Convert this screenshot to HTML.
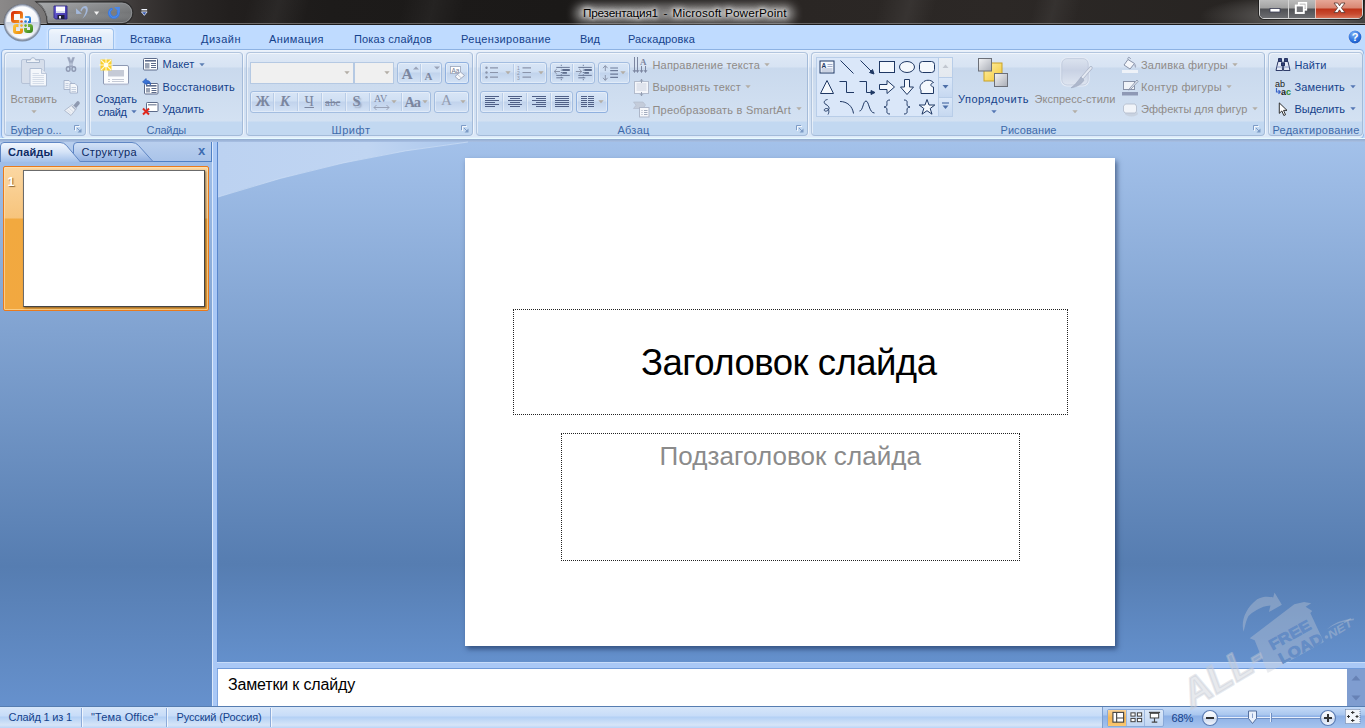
<!DOCTYPE html>
<html lang="ru"><head><meta charset="utf-8"><title>Презентация1 - Microsoft PowerPoint</title>
<style>
html,body{margin:0;padding:0}
body{width:1365px;height:728px;overflow:hidden;position:relative;background:#6A93CC;font-family:"Liberation Sans",sans-serif;font-size:12px}
.a{position:absolute}
.t{position:absolute;white-space:pre;display:block}
svg{position:absolute;overflow:visible}
.grp{position:absolute;top:52px;height:84px;border:1px solid #b2c5de;border-right-color:#a4bbd9;border-bottom-color:#a4bbd9;border-radius:4px;box-sizing:border-box;
 background:linear-gradient(#dfe9f6 0,#d7e3f3 14px,#c9d9ed 15px,#d3e1f2 68px,#c2d8f1 69px,#c2d8f1 100%);box-shadow:inset 1px 1px 0 rgba(255,255,255,.55), 1px 0 0 rgba(255,255,255,.6)}
.bg{position:absolute;height:22px;box-sizing:border-box;border:1px solid #a3bde0;border-radius:3px;background:linear-gradient(#d8e5f6 0,#cfdff3 9px,#c1d3ec 10px,#d3e2f5 100%);box-shadow:inset 0 0 0 1px rgba(255,255,255,.35)}
.sep{position:absolute;top:1px;bottom:1px;width:1px;background:#b9cde8;box-shadow:1px 0 0 rgba(255,255,255,.45)}
.cb{position:absolute;height:22px;box-sizing:border-box;border:1px solid #b5c9e3;background:#f0f0f0}
</style></head>
<body>
<div class="a" style="left:0;top:0;width:1365px;height:25px;background:linear-gradient(90deg,#8b8989 0,#7b7979 40px,#545151 100px,#3c3837 138px,#2a2726 180px,#221f1e 230px,#1d1b1a 330px,#1b1918 560px,#2a2624 800px,#2c2826 1000px,#272422 1250px,#1f1d1c 1365px)"></div><div class="a" style="left:0;top:0;width:1365px;height:25px;background:linear-gradient(105deg,rgba(255,255,255,0) 0,rgba(255,255,255,0) 240px,rgba(255,255,255,.05) 270px,rgba(255,255,255,0) 300px,rgba(255,255,255,0) 390px,rgba(255,255,255,.04) 420px,rgba(255,255,255,0) 450px,rgba(255,255,255,0) 850px,rgba(255,255,255,.06) 880px,rgba(255,255,255,0) 905px,rgba(255,255,255,0) 1000px,rgba(255,255,255,.05) 1020px,rgba(255,255,255,0) 1045px,rgba(255,255,255,0) 100%)"></div><div class="a" style="left:0;top:23px;width:1365px;height:1px;background:linear-gradient(90deg,#9a9a9a,#6e6c6c 200px,#5a5858 600px,#868484 1365px)"></div><div class="a" style="left:0;top:24px;width:1365px;height:1px;background:#1c1b1b"></div><svg style="left:0;top:0" width="160" height="25" viewBox="0 0 160 25"><defs><linearGradient id="qp" x1="0" y1="0" x2="1" y2="0"><stop offset="0" stop-color="#9c9ea0"/><stop offset=".5" stop-color="#86888a"/><stop offset="1" stop-color="#727476"/></linearGradient><linearGradient id="qv" x1="0" y1="0" x2="0" y2="1"><stop offset="0" stop-color="#fff" stop-opacity=".12"/><stop offset=".5" stop-color="#fff" stop-opacity="0"/><stop offset="1" stop-color="#000" stop-opacity=".18"/></linearGradient></defs><path d="M36.500 2 H122 A10.800 10.800 0 0 1 122 23.600 H47.500 A26 26 0 0 0 36.500 2 Z" fill="url(#qp)" stroke="#2d2c2c" stroke-width="1.300"/><path d="M37.500 3 H122 A9.800 9.800 0 0 1 122 22.600 H48 A25 25 0 0 0 37.500 3 Z" fill="url(#qv)" stroke="#a3a5a7" stroke-width=".8" stroke-opacity=".75"/></svg><div class="a" style="left:574px;top:4px;width:221px;height:19px;border-radius:9px;background:rgba(255,255,255,.42);filter:blur(4px)"></div><span class="t" style="left:583px;top:6.1px;height:15px;line-height:15px;font-size:11.8px;color:#000;letter-spacing:-0.24px;text-shadow:0 0 5px rgba(255,255,255,.8),0 0 5px rgba(255,255,255,.8),0 0 8px rgba(255,255,255,.65),0 0 10px rgba(255,255,255,.55),0 0 3px rgba(255,255,255,.5);">Презентация1</span><span class="t" style="left:663.5px;top:6.1px;height:15px;line-height:15px;font-size:11.8px;color:#000;text-shadow:0 0 5px rgba(255,255,255,.8),0 0 5px rgba(255,255,255,.8),0 0 8px rgba(255,255,255,.65),0 0 10px rgba(255,255,255,.55),0 0 3px rgba(255,255,255,.5);">-</span><span class="t" style="left:672.5px;top:6.1px;height:15px;line-height:15px;font-size:11.8px;color:#000;letter-spacing:0.13px;text-shadow:0 0 5px rgba(255,255,255,.8),0 0 5px rgba(255,255,255,.8),0 0 8px rgba(255,255,255,.65),0 0 10px rgba(255,255,255,.55),0 0 3px rgba(255,255,255,.5);">Microsoft PowerPoint</span><div class="a" style="left:1180px;top:0;width:185px;height:23px;background:radial-gradient(ellipse 110px 22px at 130px 16px,rgba(255,255,255,.36),rgba(255,255,255,0))"></div><div class="a" style="left:1259px;top:-1px;width:104px;height:20px;border-radius:0 0 5px 5px;border:1px solid #d4d4d4;box-sizing:border-box;overflow:hidden;box-shadow:0 0 0 1px rgba(20,20,20,.7)"><div class="a" style="left:0;top:0;width:28px;height:18px;background:linear-gradient(#bcbcbc 0,#a2a2a2 8px,#4f5054 9px,#6c6d71 100%)"></div><div class="a" style="left:28px;top:0;width:1px;height:18px;background:#d4d4d4"></div><div class="a" style="left:29px;top:0;width:26px;height:18px;background:linear-gradient(#bcbcbc 0,#a2a2a2 8px,#4f5054 9px,#6c6d71 100%)"></div><div class="a" style="left:55px;top:0;width:1px;height:18px;background:#e6c4bc"></div><div class="a" style="left:56px;top:0;width:46px;height:18px;background:linear-gradient(#e6a797 0,#d98672 8px,#bd3319 9px,#c74a30 14px,#d87258 100%)"></div></div><svg style="left:1259px;top:0" width="104" height="19" viewBox="0 0 104 19"><rect x="11" y="8.500" width="10" height="3.500" fill="#fff" stroke="#3a3d55" stroke-width=".8"/><rect x="39.800" y="2.800" width="7.500" height="7" fill="none" stroke="#fff" stroke-width="1.700"/><rect x="36.800" y="5.500" width="8" height="7.500" fill="#75767a" stroke="#fff" stroke-width="1.900"/><path d="M75 3 L78.700 3 L80.500 5.800 L82.300 3 L86 3 L82.400 7.800 L86 12.600 L82.300 12.600 L80.500 9.800 L78.700 12.600 L75 12.600 L78.600 7.800 Z" fill="#fff" stroke="#54322c" stroke-width=".8"/></svg><svg style="left:53px;top:5px" width="15" height="15" viewBox="0 0 15 15"><defs><linearGradient id="sv" x1="0" y1="0" x2="1" y2="1"><stop offset="0" stop-color="#7468e0"/><stop offset="1" stop-color="#3a2fa0"/></linearGradient></defs><path d="M1 1 H14 V14 H2.500 L1 12.500 Z" fill="url(#sv)" stroke="#2e2785" stroke-width=".9"/><rect x="3" y="1.500" width="9" height="6.500" fill="#fdfdff"/><rect x="3" y="6" width="9" height="2" fill="#d8dcf0"/><rect x="4.500" y="10" width="7" height="4" fill="#20203a"/><rect x="6" y="11" width="2" height="2.500" fill="#e8e8f0"/></svg><svg style="left:75px;top:5px" width="15" height="15" viewBox="0 0 15 15"><g fill="#a3b8da"><path d="M0.900 3.200 L1.200 8.900 L6.900 8.700 Z"/><path d="M5.300 5.200 C6.500 2.500 8.500 1 10.500 1 C12.500 1.200 13.200 3.500 12.600 6 C12 9 10 11.500 7.300 13.800 C9.500 10.500 11 7.500 10.900 5 C10.800 3.300 9.500 3 8.300 3.600 C7.500 4.200 7 5.200 6.500 6.400 Z"/></g></svg><svg style="left:94px;top:11px" width="6" height="5" viewBox="0 0 6 5"><path d="M0 0.500 L5.200 0.500 L2.600 4 Z" fill="#f2f2f2"/></svg><svg style="left:107px;top:5px" width="15" height="15" viewBox="0 0 15 15"><path d="M4.380 4.170 A4.500 4.500 0 1 0 11.200 6.580" fill="none" stroke="#3b7be0" stroke-width="2.900" stroke-linecap="round"/><path d="M7.100 1.900 L12.900 1.900 L12.900 7.900 Z" fill="#4a88ea"/><path d="M4.380 4.170 A4.500 4.500 0 1 0 11.200 6.580" fill="none" stroke="#6aa0f4" stroke-width="1" stroke-linecap="round" opacity=".5"/></svg><svg style="left:140.500px;top:9px" width="7" height="7" viewBox="0 0 8 8"><rect x="0.500" y="0" width="6.500" height="1.600" fill="#eef3fc"/><path d="M0.500 3.300 L7 3.300 L3.800 7.300 Z" fill="#2d4fa8" stroke="#eef3fc" stroke-width=".9"/></svg>
<div class="a" style="left:0;top:25px;width:1365px;height:26px;background:#bfdbff"></div><div class="a" style="left:48px;top:28px;width:66px;height:22px;box-sizing:border-box;border:1px solid #9fc3ee;border-bottom:none;border-radius:4px 4px 0 0;background:linear-gradient(#f2f7fd 0,#e6effb 6px,#dce8f7 100%);box-shadow:0 0 3px rgba(255,255,255,.9)"></div><span class="t" style="left:60px;top:31.8px;height:14px;line-height:14px;font-size:11px;color:#15428B;letter-spacing:0.02px;">Главная</span><span class="t" style="left:130px;top:31.8px;height:14px;line-height:14px;font-size:11px;color:#15428B;letter-spacing:0.02px;">Вставка</span><span class="t" style="left:201px;top:31.8px;height:14px;line-height:14px;font-size:11px;color:#15428B;letter-spacing:0.50px;">Дизайн</span><span class="t" style="left:269px;top:31.8px;height:14px;line-height:14px;font-size:11px;color:#15428B;letter-spacing:0.42px;">Анимация</span><span class="t" style="left:354px;top:31.8px;height:14px;line-height:14px;font-size:11px;color:#15428B;letter-spacing:0.17px;">Показ слайдов</span><span class="t" style="left:461px;top:31.8px;height:14px;line-height:14px;font-size:11px;color:#15428B;letter-spacing:0.36px;">Рецензирование</span><span class="t" style="left:580px;top:31.8px;height:14px;line-height:14px;font-size:11px;color:#15428B;letter-spacing:0.03px;">Вид</span><span class="t" style="left:628px;top:31.8px;height:14px;line-height:14px;font-size:11px;color:#15428B;letter-spacing:0.14px;">Раскадровка</span><svg style="left:1347px;top:29px" width="16" height="16" viewBox="0 0 16 16"><defs><radialGradient id="hg" cx=".4" cy=".3" r=".8"><stop offset="0" stop-color="#7fb2f5"/><stop offset=".6" stop-color="#2a6fdc"/><stop offset="1" stop-color="#174fb0"/></radialGradient></defs><circle cx="8" cy="8" r="7" fill="url(#hg)" stroke="#cfe0f8" stroke-width="1.2"/><text x="8" y="12" text-anchor="middle" font-family="Liberation Sans" font-weight="bold" font-size="11" fill="#fff">?</text></svg>
<div class="a" style="left:0;top:50px;width:1365px;height:92px;background:#bfdbff"></div><div class="a" style="left:1px;top:49px;width:1363px;height:90px;box-sizing:border-box;border:1px solid #8db2e3;border-radius:4px;background:linear-gradient(#edf3fb 0,#e4edf9 3px,#d6e3f4 17px,#cbdbef 18px,#d3e2f4 70px,#dbe8f8 86px,#e9f3fd 89px);"></div><div class="a" style="left:0;top:138px;width:1365px;height:4px;background:linear-gradient(#e6fbff 0,#e6fbff 1px,#93aace 1px,#a8c0e4 100%)"></div>
<div class="grp" style="left:4px;width:82px"></div><svg style="left:20px;top:56px" width="28" height="31" viewBox="0 0 28 31"><rect x="1.500" y="3.500" width="23" height="24" rx="1.500" fill="#d6deeb" stroke="#b5c2d7"/><path d="M6.500 6.500 V4 H10.500 C10.500 1 15.500 1 15.500 4 H19.500 V6.500 Z" fill="#eef2f8" stroke="#a3b2ca" stroke-width=".9"/><path d="M10 12.500 H21.500 L26.500 17.500 V30 H10 Z" fill="#f4f7fb" stroke="#b0bed4"/><path d="M21.500 12.500 V17.500 H26.500" fill="#e2e8f2" stroke="#b0bed4" stroke-width=".8"/><path d="M12.500 17.500 H19 M12.500 19.500 H24 M12.500 21.500 H24 M12.500 23.500 H24 M12.500 25.500 H24 M12.500 27.500 H24" stroke="#cdd6e5" stroke-width=".8"/></svg><span class="t" style="left:10.5px;top:92.0px;height:14px;line-height:14px;font-size:11px;color:#8f8b88;letter-spacing:-0.02px;">Вставить</span><svg style="left:30.5px;top:110px" width="6" height="4" viewBox="0 0 6 4"><path d="M0.300 0.300 L5.700 0.300 L3 3.300 Z" fill="#b3aea6"/></svg><svg style="left:64px;top:57px" width="14" height="16" viewBox="0 0 14 16"><path d="M3.500 0.500 L5.500 0.500 L8.800 9.500 L7 10 Z M10.500 0.500 L8.500 0.500 L5.200 9.500 L7 10 Z" fill="#9ba6be" stroke="#8f9ab3" stroke-width=".4"/><ellipse cx="4.200" cy="12" rx="1.800" ry="2.300" fill="none" stroke="#8f9ab3" stroke-width="1.500"/><ellipse cx="9.800" cy="12" rx="1.800" ry="2.300" fill="none" stroke="#8f9ab3" stroke-width="1.500"/></svg><svg style="left:63px;top:80px" width="16" height="14" viewBox="0 0 16 14"><path d="M1 0.500 H6 L8.500 3 V9.500 H1 Z" fill="#eef2f8" stroke="#a3b0c8" stroke-width=".9"/><path d="M7 3.500 H12 L14.500 6 V13 H7 Z" fill="#f4f7fb" stroke="#a3b0c8" stroke-width=".9"/><path d="M8.500 7.500 H13 M8.500 9.500 H13 M8.500 11.500 H13 M2.500 3.500 H5.500 M2.500 5.500 H5.500 M2.500 7.500 H5.500" stroke="#b9c4d8" stroke-width=".8"/></svg><svg style="left:63px;top:101px" width="17" height="15" viewBox="0 0 17 15"><path d="M15 2 L12 5.500" stroke="#8e99b0" stroke-width="3.600" stroke-linecap="round"/><path d="M9.500 3.500 L13.500 7.500 L8 14.500 L1.500 9.500 Z" fill="#eef1f6" stroke="#aab5c9" stroke-width=".9"/><path d="M9 5 L12.500 8.500" stroke="#aab5c9" stroke-width="1.200"/><path d="M4.500 9 L8 12.500 M6.500 7.500 L10 10.500" stroke="#cfd6e2" stroke-width=".8"/></svg><span class="t" style="left:10.5px;top:122.6px;height:14px;line-height:14px;font-size:11px;color:#3e6aaa;letter-spacing:-0.10px;">Буфер о...</span><svg style="left:74px;top:125px" width="8" height="8" viewBox="0 0 8 8"><path d="M0.500 5 V0.500 H5" fill="none" stroke="#7d9bc6" stroke-width="1"/><path d="M7.500 3.500 V7.500 H3.500 Z" fill="#7d9bc6"/><path d="M3 3 L6 6" stroke="#7d9bc6" stroke-width="1"/><path d="M1.500 6 V1.500 H6" fill="none" stroke="#fff" stroke-width="1" opacity=".8"/></svg>
<div class="grp" style="left:89px;width:154px"></div><svg style="left:98px;top:57px" width="34" height="30" viewBox="0 0 34 30"><rect x="5.500" y="8.500" width="25" height="19" rx="1.500" fill="#fbfcfe" stroke="#8c98b3"/><rect x="6.500" y="26" width="24" height="2.500" fill="#c9d2e2" opacity=".7"/><rect x="10" y="13" width="16" height="6.500" fill="#c5cad6"/><path d="M10 22.500 H12 M14 22.500 H26 M10 24.500 H12 M14 24.500 H26" stroke="#c5cad6" stroke-width="1"/><rect x="2.500" y="2.500" width="11" height="11" fill="#fbd028"/><g stroke="#fff8d8" stroke-width="1.100"><path d="M8 1 V15 M1 8 H15 M3 3 L13 13 M13 3 L3 13"/></g><circle cx="8" cy="8" r="2.200" fill="#fffef0"/></svg><span class="t" style="left:95.5px;top:91.8px;height:14px;line-height:14px;font-size:11px;color:#15428B;letter-spacing:-0.04px;">Создать</span><span class="t" style="left:98px;top:104.5px;height:14px;line-height:14px;font-size:11px;color:#15428B;letter-spacing:-0.42px;">слайд</span><svg style="left:130.5px;top:110px" width="6" height="4" viewBox="0 0 6 4"><path d="M0.300 0.300 L5.700 0.300 L3 3.300 Z" fill="#5577b4"/></svg><svg style="left:143px;top:58px" width="16" height="13" viewBox="0 0 16 13"><rect x="0.500" y="0.500" width="14" height="11.500" rx="1" fill="#fff" stroke="#5d6b8a"/><rect x="2" y="2" width="11" height="1.600" fill="#5d6b8a"/><rect x="2" y="5" width="4.500" height="5.500" fill="#9aa3b5"/><path d="M8 5.500 H13 M8 7.500 H13 M8 9.500 H13" stroke="#5d6b8a" stroke-width="1"/></svg><span class="t" style="left:162.5px;top:57.2px;height:14px;line-height:14px;font-size:11px;color:#15428B;letter-spacing:0.17px;">Макет</span><svg style="left:198.5px;top:63px" width="6" height="4" viewBox="0 0 6 4"><path d="M0.300 0.300 L5.700 0.300 L3 3.300 Z" fill="#5d7fb3"/></svg><svg style="left:142px;top:78px" width="17" height="17" viewBox="0 0 17 17"><rect x="2.500" y="5.500" width="13.500" height="10.500" rx="1" fill="#fff" stroke="#5d6b8a"/><rect x="4" y="7" width="10.500" height="1.600" fill="#5d6b8a"/><rect x="4" y="10" width="4" height="4.500" fill="#9aa3b5"/><path d="M9.500 10.500 H14.500 M9.500 12.500 H14.500 M9.500 14.500 H14.500" stroke="#5d6b8a" stroke-width="1"/><path d="M0.500 4 L4 0.500 L4.500 2.500 C7.500 2.500 9 4.500 8.500 7 C8 5.500 6.500 5 4.800 5.200 L5 7 Z" fill="#3a73d6" stroke="#1d4fae" stroke-width=".6"/></svg><span class="t" style="left:162.5px;top:80.3px;height:14px;line-height:14px;font-size:11px;color:#15428B;letter-spacing:0.17px;">Восстановить</span><svg style="left:142px;top:102px" width="17" height="13" viewBox="0 0 17 13"><rect x="4.500" y="0.500" width="11.500" height="9" rx=".8" fill="#fff" stroke="#5d6b8a"/><rect x="6" y="2" width="8.500" height="1.500" fill="#8f98ab"/><path d="M1 6.500 L7 12.500 M7 6.500 L1 12.500" stroke="#e0261c" stroke-width="2"/></svg><span class="t" style="left:162.5px;top:102.3px;height:14px;line-height:14px;font-size:11px;color:#15428B;letter-spacing:-0.07px;">Удалить</span><span class="t" style="left:146.5px;top:122.6px;height:14px;line-height:14px;font-size:11px;color:#3e6aaa;letter-spacing:-0.24px;">Слайды</span>
<div class="grp" style="left:246px;width:227px"></div><div class="cb" style="left:250px;top:62px;width:104px"></div><svg style="left:343.5px;top:71px" width="6" height="4" viewBox="0 0 6 4"><path d="M0.300 0.300 L5.700 0.300 L3 3.300 Z" fill="#b3aea6"/></svg><div class="cb" style="left:354px;top:62px;width:40px"></div><svg style="left:383.5px;top:71px" width="6" height="4" viewBox="0 0 6 4"><path d="M0.300 0.300 L5.700 0.300 L3 3.300 Z" fill="#b3aea6"/></svg><div class="bg" style="left:397px;top:62px;width:45px"><div class="sep" style="left:22px"></div></div><span class="t" style="left:401.5px;top:64.2px;height:20px;line-height:20px;font-size:15.5px;color:#7b869f;font-weight:bold;font-family:'Liberation Serif', serif;">A</span><svg style="left:413px;top:66px" width="6" height="4" viewBox="0 0 6 4"><path d="M0 3.500 L3 0.500 L6 3.500 Z" fill="#9aa3b8"/></svg><span class="t" style="left:424.5px;top:68.5px;height:14px;line-height:14px;font-size:11px;color:#7b869f;font-weight:bold;font-family:'Liberation Serif', serif;">A</span><svg style="left:434px;top:66px" width="6" height="4" viewBox="0 0 6 4"><path d="M0 0.500 L6 0.500 L3 3.500 Z" fill="#9aa3b8"/></svg><div class="bg" style="left:445px;top:62px;width:24px;border-color:#8fb0df"></div><svg style="left:448px;top:64px" width="18" height="18" viewBox="0 0 18 18"><rect x="2.500" y="2.500" width="10" height="7" fill="#fff" stroke="#9aa3b8" stroke-width=".8"/><text x="3.500" y="8.500" font-family="Liberation Sans" font-size="6.500" fill="#6f7a93">Aa</text><path d="M12.500 8 L16.500 11.500 L11 16 L7 12.500 Z" fill="#f6f8fb" stroke="#9aa3b8" stroke-width=".9"/><path d="M9.500 10.500 L13.500 14" stroke="#b6bfd0" stroke-width=".8"/></svg><div class="bg" style="left:250px;top:91px;width:181px"><div class="sep" style="left:22px"></div><div class="sep" style="left:46px"></div><div class="sep" style="left:70px"></div><div class="sep" style="left:94px"></div><div class="sep" style="left:118px"></div><div class="sep" style="left:150px"></div></div><span class="t" style="left:255.5px;top:91.7px;height:19px;line-height:19px;font-size:14.5px;color:#7b869f;font-weight:bold;font-family:'Liberation Serif', serif;">Ж</span><span class="t" style="left:280px;top:91.7px;height:19px;line-height:19px;font-size:14.5px;color:#7b869f;font-weight:bold;font-style:italic;font-family:'Liberation Serif', serif;">К</span><span class="t" style="left:304.5px;top:91.7px;height:19px;line-height:19px;font-size:14.5px;color:#7b869f;font-family:'Liberation Serif', serif;text-decoration:underline;">Ч</span><span class="t" style="left:325px;top:94.8px;height:14px;line-height:14px;font-size:11px;color:#7b869f;font-family:'Liberation Serif', serif;text-decoration:line-through;">abc</span><span class="t" style="left:352.5px;top:91.5px;height:19px;line-height:19px;font-size:14.5px;color:#7b869f;font-weight:bold;font-family:'Liberation Serif', serif;text-shadow:1.500px 1.500px 1.500px rgba(90,100,130,.4);">S</span><span class="t" style="left:374px;top:91.5px;height:13px;line-height:13px;font-size:10px;color:#7b869f;font-family:'Liberation Serif', serif;">AV</span><svg style="left:373px;top:104px" width="17" height="7" viewBox="0 0 17 7"><path d="M1 3.500 H16 M3.500 1 L1 3.500 L3.500 6 M13.500 1 L16 3.500 L13.500 6" fill="none" stroke="#9aa3b8" stroke-width="1"/></svg><svg style="left:390.5px;top:100px" width="6" height="4" viewBox="0 0 6 4"><path d="M0.300 0.300 L5.700 0.300 L3 3.300 Z" fill="#b3aea6"/></svg><span class="t" style="left:404.5px;top:92.5px;height:19px;line-height:19px;font-size:14.5px;color:#7b869f;letter-spacing:-1.12px;font-weight:bold;font-family:'Liberation Serif', serif;">Aa</span><svg style="left:421.5px;top:100px" width="6" height="4" viewBox="0 0 6 4"><path d="M0.300 0.300 L5.700 0.300 L3 3.300 Z" fill="#b3aea6"/></svg><div class="bg" style="left:434px;top:91px;width:35px"></div><span class="t" style="left:441px;top:90.2px;height:20px;line-height:20px;font-size:15px;color:#929bb0;font-family:'Liberation Serif', serif;">A</span><svg style="left:459.5px;top:100px" width="6" height="4" viewBox="0 0 6 4"><path d="M0.300 0.300 L5.700 0.300 L3 3.300 Z" fill="#b3aea6"/></svg><span class="t" style="left:331.5px;top:122.6px;height:14px;line-height:14px;font-size:11px;color:#3e6aaa;letter-spacing:0.56px;">Шрифт</span><svg style="left:461px;top:125px" width="8" height="8" viewBox="0 0 8 8"><path d="M0.500 5 V0.500 H5" fill="none" stroke="#7d9bc6" stroke-width="1"/><path d="M7.500 3.500 V7.500 H3.500 Z" fill="#7d9bc6"/><path d="M3 3 L6 6" stroke="#7d9bc6" stroke-width="1"/><path d="M1.500 6 V1.500 H6" fill="none" stroke="#fff" stroke-width="1" opacity=".8"/></svg>
<div class="grp" style="left:476px;width:332px"></div><div class="bg" style="left:480px;top:62px;width:67px"><div class="sep" style="left:32px"></div></div><svg style="left:485px;top:66px" width="14" height="13" viewBox="0 0 14 13"><circle cx="1.500" cy="1.800" r="1.200" fill="#8a94aa"/><circle cx="1.500" cy="6.500" r="1.200" fill="#8a94aa"/><circle cx="1.500" cy="11.200" r="1.200" fill="#8a94aa"/><path d="M5 1.800 H13 M5 6.500 H13 M5 11.200 H13" stroke="#8a94aa" stroke-width="1.200"/></svg><svg style="left:504.5px;top:71px" width="6" height="4" viewBox="0 0 6 4"><path d="M0.300 0.300 L5.700 0.300 L3 3.300 Z" fill="#b3aea6"/></svg><svg style="left:517px;top:65px" width="16" height="15" viewBox="0 0 16 15"><text x="0" y="4.500" font-size="5" font-family="Liberation Sans" fill="#8a94aa">1</text><text x="0" y="9.500" font-size="5" font-family="Liberation Sans" fill="#8a94aa">2</text><text x="0" y="14.500" font-size="5" font-family="Liberation Sans" fill="#8a94aa">3</text><path d="M5.500 2.800 H14 M5.500 7.500 H14 M5.500 12.200 H14" stroke="#8a94aa" stroke-width="1.200"/></svg><svg style="left:537.5px;top:71px" width="6" height="4" viewBox="0 0 6 4"><path d="M0.300 0.300 L5.700 0.300 L3 3.300 Z" fill="#b3aea6"/></svg><div class="bg" style="left:550px;top:62px;width:45px"><div class="sep" style="left:21px"></div></div><svg style="left:553px;top:64px" width="18" height="17" viewBox="0 0 18 17"><path d="M8.300 0.800 V16.200" stroke="#5d6c8c" stroke-width="1" stroke-dasharray="1 1.400"/><path d="M3.300 3.400 H16.800 M3.300 11.400 H16.800 M3.300 13.800 H10.300" stroke="#6c7a98" stroke-width="1"/><path d="M9.300 6 H16.800 M9.300 8.800 H13.900" stroke="#5d6c8c" stroke-width="1.800"/><path d="M7 7.500 H1.200 M3.800 5 L1.200 7.500 L3.800 10" fill="none" stroke="#8a94aa" stroke-width="1"/></svg><svg style="left:575.3px;top:64px" width="18" height="17" viewBox="0 0 18 17"><path d="M8.300 0.800 V16.200" stroke="#5d6c8c" stroke-width="1" stroke-dasharray="1 1.400"/><path d="M3.300 3.400 H16.800 M3.300 11.400 H16.800 M3.300 13.800 H10.300" stroke="#6c7a98" stroke-width="1"/><path d="M9.300 6 H16.800 M9.300 8.800 H13.900" stroke="#5d6c8c" stroke-width="1.800"/><path d="M0.800 7.500 H6.800 M4.200 5 L6.800 7.500 L4.200 10" fill="none" stroke="#8a94aa" stroke-width="1"/></svg><div class="bg" style="left:598px;top:62px;width:32px"></div><svg style="left:602px;top:65px" width="17" height="16" viewBox="0 0 17 16"><path d="M3.300 0.800 V6 M1 3.200 L3.300 0.600 L5.600 3.200 M3.300 10 V15.200 M1 12.800 L3.300 15.400 L5.600 12.800" fill="none" stroke="#8a94aa" stroke-width="1"/><path d="M8.200 3 H16 M8.200 5.700 H16 M8.200 9.200 H16 M8.200 12.300 H16" stroke="#6c7a98" stroke-width="1.200"/></svg><svg style="left:619.5px;top:71px" width="6" height="4" viewBox="0 0 6 4"><path d="M0.300 0.300 L5.700 0.300 L3 3.300 Z" fill="#b3aea6"/></svg><div class="bg" style="left:480px;top:91px;width:93px"><div class="sep" style="left:21px"></div><div class="sep" style="left:45px"></div><div class="sep" style="left:69px"></div></div><svg style="left:485px;top:96px" width="14" height="12" viewBox="0 0 14 12" shape-rendering="crispEdges"><rect x="0" y="0" width="14" height="1" fill="#4f5f86"/><rect x="0" y="2" width="10" height="1" fill="#4f5f86"/><rect x="0" y="4" width="14" height="1" fill="#4f5f86"/><rect x="0" y="6" width="10" height="1" fill="#4f5f86"/><rect x="0" y="8" width="14" height="1" fill="#4f5f86"/><rect x="0" y="10" width="10" height="1" fill="#4f5f86"/></svg><svg style="left:508px;top:96px" width="14" height="12" viewBox="0 0 14 12" shape-rendering="crispEdges"><rect x="0" y="0" width="14" height="1" fill="#4f5f86"/><rect x="2" y="2" width="10" height="1" fill="#4f5f86"/><rect x="0" y="4" width="14" height="1" fill="#4f5f86"/><rect x="2" y="6" width="10" height="1" fill="#4f5f86"/><rect x="0" y="8" width="14" height="1" fill="#4f5f86"/><rect x="2" y="10" width="10" height="1" fill="#4f5f86"/></svg><svg style="left:532px;top:96px" width="14" height="12" viewBox="0 0 14 12" shape-rendering="crispEdges"><rect x="0" y="0" width="14" height="1" fill="#4f5f86"/><rect x="4" y="2" width="10" height="1" fill="#4f5f86"/><rect x="0" y="4" width="14" height="1" fill="#4f5f86"/><rect x="4" y="6" width="10" height="1" fill="#4f5f86"/><rect x="0" y="8" width="14" height="1" fill="#4f5f86"/><rect x="4" y="10" width="10" height="1" fill="#4f5f86"/></svg><svg style="left:555px;top:96px" width="14" height="12" viewBox="0 0 14 12" shape-rendering="crispEdges"><rect x="0" y="0" width="14" height="1" fill="#4f5f86"/><rect x="0" y="2" width="14" height="1" fill="#4f5f86"/><rect x="0" y="4" width="14" height="1" fill="#4f5f86"/><rect x="0" y="6" width="14" height="1" fill="#4f5f86"/><rect x="0" y="8" width="14" height="1" fill="#4f5f86"/><rect x="0" y="10" width="14" height="1" fill="#4f5f86"/></svg><div class="bg" style="left:576px;top:91px;width:32px;border-color:#8fb0df"></div><svg style="left:581px;top:96px" width="14" height="12" viewBox="0 0 14 12" shape-rendering="crispEdges"><rect x="0" y="0" width="6" height="1" fill="#4f5f86"/><rect x="7" y="0" width="6" height="1" fill="#4f5f86"/><rect x="0" y="2" width="6" height="1" fill="#4f5f86"/><rect x="7" y="2" width="6" height="1" fill="#4f5f86"/><rect x="0" y="4" width="6" height="1" fill="#4f5f86"/><rect x="7" y="4" width="6" height="1" fill="#4f5f86"/><rect x="0" y="6" width="6" height="1" fill="#4f5f86"/><rect x="7" y="6" width="6" height="1" fill="#4f5f86"/><rect x="0" y="8" width="6" height="1" fill="#4f5f86"/><rect x="7" y="8" width="6" height="1" fill="#4f5f86"/><rect x="0" y="10" width="6" height="1" fill="#4f5f86"/><rect x="7" y="10" width="6" height="1" fill="#4f5f86"/></svg><svg style="left:597.5px;top:100px" width="6" height="4" viewBox="0 0 6 4"><path d="M0.300 0.300 L5.700 0.300 L3 3.300 Z" fill="#b3aea6"/></svg><svg style="left:633px;top:57px" width="16" height="16" viewBox="0 0 16 16"><path d="M1.500 0 V15 M4.500 0 V15 M8.500 9 V15 M12.500 9 V15" stroke="#7c86a0" stroke-width="1"/><path d="M0 13 L1.500 15.500 L3 13 M3 13 L4.500 15.500 L6 13 M7 13 L8.500 15.500 L10 13 M11 13 L12.500 15.500 L14 13" fill="none" stroke="#7c86a0" stroke-width=".9"/><text x="7" y="7.500" font-family="Liberation Serif" font-weight="bold" font-size="9" fill="#7c86a0">A</text></svg><span class="t" style="left:652.5px;top:57.7px;height:14px;line-height:14px;font-size:11px;color:#8f8b88;letter-spacing:0.18px;">Направление текста</span><svg style="left:763.5px;top:63px" width="6" height="4" viewBox="0 0 6 4"><path d="M0.300 0.300 L5.700 0.300 L3 3.300 Z" fill="#b3aea6"/></svg><svg style="left:633px;top:79px" width="17" height="17" viewBox="0 0 17 17"><rect x="1.500" y="2.500" width="14" height="12" fill="#f4f6fa" stroke="#b3bccd"/><path d="M3.500 5 H13.500 M3.500 7 H13.500 M3.500 9 H13.500 M3.500 11 H13.500" stroke="#c1c9d8" stroke-width=".8"/><path d="M8.500 0 V4 M7 1.800 L8.500 0.300 L10 1.800 M8.500 13 V17 M7 15.200 L8.500 16.700 L10 15.200" fill="none" stroke="#8e98ad" stroke-width=".9"/></svg><span class="t" style="left:652.5px;top:80.3px;height:14px;line-height:14px;font-size:11px;color:#8f8b88;letter-spacing:0.19px;">Выровнять текст</span><svg style="left:744.5px;top:85px" width="6" height="4" viewBox="0 0 6 4"><path d="M0.300 0.300 L5.700 0.300 L3 3.300 Z" fill="#b3aea6"/></svg><svg style="left:633px;top:101px" width="17" height="17" viewBox="0 0 17 17"><path d="M0.500 1 H10 L12.500 4 L10 7.500 H0.500 L3 4.200 Z" fill="#c4ccda" stroke="#b0b9ca" stroke-width=".6"/><rect x="6.500" y="6.500" width="9.500" height="9.500" fill="#f6f8fb" stroke="#aeb7c9"/><path d="M8.500 9.500 H9.500 M11 9.500 H14.500 M8.500 11.500 H9.500 M11 11.500 H14.500 M8.500 13.500 H9.500 M11 13.500 H14.500" stroke="#9aa4b8" stroke-width=".9"/></svg><span class="t" style="left:652.5px;top:102.5px;height:14px;line-height:14px;font-size:11px;color:#8f8b88;letter-spacing:0.21px;">Преобразовать в SmartArt</span><svg style="left:795.5px;top:107px" width="6" height="4" viewBox="0 0 6 4"><path d="M0.300 0.300 L5.700 0.300 L3 3.300 Z" fill="#b3aea6"/></svg><span class="t" style="left:617.5px;top:122.6px;height:14px;line-height:14px;font-size:11px;color:#3e6aaa;letter-spacing:0.23px;">Абзац</span><svg style="left:796px;top:125px" width="8" height="8" viewBox="0 0 8 8"><path d="M0.500 5 V0.500 H5" fill="none" stroke="#7d9bc6" stroke-width="1"/><path d="M7.500 3.500 V7.500 H3.500 Z" fill="#7d9bc6"/><path d="M3 3 L6 6" stroke="#7d9bc6" stroke-width="1"/><path d="M1.500 6 V1.500 H6" fill="none" stroke="#fff" stroke-width="1" opacity=".8"/></svg>
<div class="grp" style="left:811px;width:454px"></div><div class="a" style="left:816px;top:57px;width:137px;height:60px;box-sizing:border-box;border:1px solid #b8cde8;background:#dae7f9"></div><div class="a" style="left:938px;top:57px;width:15px;height:60px;box-sizing:border-box;border:1px solid #b8cde8;background:linear-gradient(#e9eef4 0,#e4e9ef 19px,#b8cde8 19px,#b8cde8 20px,#dbe8f9 20px,#c6d8f0 39px,#b8cde8 39px,#b8cde8 40px,#dbe8f9 40px,#c6d8f0 100%)"></div><svg style="left:942px;top:64px" width="7" height="4" viewBox="0 0 7 4"><path d="M0.500 4 L3.500 0.500 L6.500 4 Z" fill="#c2c7d0"/></svg><svg style="left:942px;top:85px" width="7" height="4" viewBox="0 0 7 4"><path d="M0.500 0 L6.500 0 L3.500 3.500 Z" fill="#4d6fa8"/></svg><svg style="left:942px;top:102px" width="7" height="8" viewBox="0 0 7 8"><path d="M0 1 H7" stroke="#4d6fa8" stroke-width="1.200"/><path d="M0.500 3.500 L6.500 3.500 L3.500 7 Z" fill="#4d6fa8"/></svg><svg style="left:818px;top:58px" width="18" height="18" viewBox="0 0 18 18"><g fill="none" stroke="#1f3864" stroke-width="1"><rect x="2" y="3" width="14" height="12" fill="#f4f8fd"/><text x="3.500" y="9.500" font-family="Liberation Sans" font-weight="bold" font-size="6.500" fill="#1f3864" stroke="none">A</text><path d="M9.500 6.500 H14.500 M9.500 8.500 H14.500 M3.500 11 H14.500 M3.500 13 H14.500" stroke-width=".600" stroke="#6b7ca8"/></g></svg><svg style="left:838px;top:58px" width="18" height="18" viewBox="0 0 18 18"><g fill="none" stroke="#1f3864" stroke-width="1"><path d="M2.500 2.500 L15.500 15.500"/></g></svg><svg style="left:858px;top:58px" width="18" height="18" viewBox="0 0 18 18"><g fill="none" stroke="#1f3864" stroke-width="1"><path d="M2.500 2.500 L14.500 14.500"/><path d="M16 16 L11.500 14.500 L14.500 11.500 Z" fill="#1f3864"/></g></svg><svg style="left:878px;top:58px" width="18" height="18" viewBox="0 0 18 18"><g fill="none" stroke="#1f3864" stroke-width="1"><rect x="1.500" y="3.500" width="15" height="11" fill="#f4f8fd"/></g></svg><svg style="left:898px;top:58px" width="18" height="18" viewBox="0 0 18 18"><g fill="none" stroke="#1f3864" stroke-width="1"><ellipse cx="9" cy="9" rx="7.500" ry="5.500" fill="#f4f8fd"/></g></svg><svg style="left:918px;top:58px" width="18" height="18" viewBox="0 0 18 18"><g fill="none" stroke="#1f3864" stroke-width="1"><rect x="1.500" y="3.500" width="15" height="11" rx="3" fill="#f4f8fd"/></g></svg><svg style="left:818px;top:78px" width="18" height="18" viewBox="0 0 18 18"><g fill="none" stroke="#1f3864" stroke-width="1"><path d="M9 2.500 L15.500 15.500 H2.500 Z" fill="#f4f8fd"/></g></svg><svg style="left:838px;top:78px" width="18" height="18" viewBox="0 0 18 18"><g fill="none" stroke="#1f3864" stroke-width="1"><path d="M1.500 3.500 H8.500 V14.500 H16"/></g></svg><svg style="left:858px;top:78px" width="18" height="18" viewBox="0 0 18 18"><g fill="none" stroke="#1f3864" stroke-width="1"><path d="M1.500 3.500 H8.500 V14.500 H14"/><path d="M17 14.500 L13 12.500 V16.500 Z" fill="#1f3864"/></g></svg><svg style="left:878px;top:78px" width="18" height="18" viewBox="0 0 18 18"><g fill="none" stroke="#1f3864" stroke-width="1"><path d="M1.500 6.500 H9 V2.500 L16.500 9 L9 15.500 V11.500 H1.500 Z" fill="#f4f8fd"/></g></svg><svg style="left:898px;top:78px" width="18" height="18" viewBox="0 0 18 18"><g fill="none" stroke="#1f3864" stroke-width="1"><path d="M6.500 1.500 H11.500 V9 H15.500 L9 16.500 L2.500 9 H6.500 Z" fill="#f4f8fd"/></g></svg><svg style="left:918px;top:78px" width="18" height="18" viewBox="0 0 18 18"><g fill="none" stroke="#1f3864" stroke-width="1"><path d="M5 4.500 C7 1.500 13 1.500 15.500 4.500 C12 5.500 12 8.500 15.500 9 V15.500 H3 V12 C1.500 11 1.500 6.500 5 4.500 Z" fill="#f4f8fd"/></g></svg><svg style="left:818px;top:97.8px" width="18" height="18" viewBox="0 0 18 18"><g fill="none" stroke="#1f3864" stroke-width="1"><path d="M9.500 1.500 C6 2 5 5 8 6.500 C12 8.500 12 12 8.500 13 C5.500 13.800 5.500 10.500 8.500 10.500 C11 10.500 11.500 14 10 16.500"/></g></svg><svg style="left:838px;top:97.8px" width="18" height="18" viewBox="0 0 18 18"><g fill="none" stroke="#1f3864" stroke-width="1"><path d="M2 3.500 C9 3.500 14.500 8 15.500 15.500"/></g></svg><svg style="left:858px;top:97.8px" width="18" height="18" viewBox="0 0 18 18"><g fill="none" stroke="#1f3864" stroke-width="1"><path d="M1.500 13 C5 13 5 3 8 3 C11 3 11 15 16.500 15"/></g></svg><svg style="left:878px;top:97.8px" width="18" height="18" viewBox="0 0 18 18"><g fill="none" stroke="#1f3864" stroke-width="1"><path d="M12 2 C8 2 9 4.500 9 6 C9 8 8 9 6 9 C8 9 9 10 9 12 C9 13.500 8 16 12 16"/></g></svg><svg style="left:898px;top:97.8px" width="18" height="18" viewBox="0 0 18 18"><g fill="none" stroke="#1f3864" stroke-width="1"><path d="M6 2 C10 2 9 4.500 9 6 C9 8 10 9 12 9 C10 9 9 10 9 12 C9 13.500 10 16 6 16"/></g></svg><svg style="left:918px;top:97.8px" width="18" height="18" viewBox="0 0 18 18"><g fill="none" stroke="#1f3864" stroke-width="1"><path d="M9 1.500 L11 7 H16.800 L12.200 10.500 L14 16.200 L9 12.700 L4 16.200 L5.800 10.500 L1.200 7 H7 Z" fill="#f4f8fd"/></g></svg><svg style="left:976px;top:56px" width="34" height="33" viewBox="0 0 34 33"><defs><linearGradient id="gq" x1="0" y1="0" x2="1" y2="1"><stop offset="0" stop-color="#f3f4f6"/><stop offset="1" stop-color="#a9adb6"/></linearGradient><linearGradient id="yq" x1="0" y1="0" x2="1" y2="1"><stop offset="0" stop-color="#fff2a8"/><stop offset="1" stop-color="#f2c637"/></linearGradient></defs><rect x="8" y="7" width="18" height="18" fill="url(#yq)" stroke="#c9a227"/><rect x="2.500" y="2.500" width="13" height="12.500" fill="url(#gq)" stroke="#6b6f78"/><rect x="18.500" y="17.500" width="13" height="13" fill="url(#gq)" stroke="#6b6f78"/></svg><span class="t" style="left:958px;top:92.3px;height:14px;line-height:14px;font-size:11px;color:#15428B;letter-spacing:0.50px;">Упорядочить</span><svg style="left:990.5px;top:110px" width="6" height="4" viewBox="0 0 6 4"><path d="M0.300 0.300 L5.700 0.300 L3 3.300 Z" fill="#5577b4"/></svg><svg style="left:1060px;top:56px" width="34" height="34" viewBox="0 0 34 34"><defs><linearGradient id="xq" x1="0" y1="0" x2="0" y2="1"><stop offset="0" stop-color="#dde4f0"/><stop offset=".45" stop-color="#c9d2e4"/><stop offset="1" stop-color="#dfe6f1"/></linearGradient></defs><rect x="1" y="1.800" width="28" height="28" rx="6" fill="url(#xq)" stroke="#e6ecf6" stroke-width="1.200"/><rect x="1.800" y="2.600" width="26.400" height="26.400" rx="5.300" fill="none" stroke="#b9c4d9" stroke-width=".7"/><path d="M30.900 11.900 L22 22" stroke="#aab3c6" stroke-width="3.400" stroke-linecap="round"/><path d="M30.900 11.900 L22 22" stroke="#e4e9f2" stroke-width="2" stroke-linecap="round"/><path d="M21 21 L24 24 C22 28 17 31 11 31.800 C14.500 29.500 17.500 25.500 21 21 Z" fill="#adb7cb" stroke="#9aa5bc" stroke-width=".5"/></svg><span class="t" style="left:1034.5px;top:92.3px;height:14px;line-height:14px;font-size:11px;color:#8f8b88;letter-spacing:0.04px;">Экспресс-стили</span><svg style="left:1071.5px;top:110px" width="6" height="4" viewBox="0 0 6 4"><path d="M0.300 0.300 L5.700 0.300 L3 3.300 Z" fill="#b3aea6"/></svg><svg style="left:1122px;top:56px" width="17" height="17" viewBox="0 0 17 17"><path d="M6 3.500 L12.500 7.500 L8 13 L2 9 Z" fill="#f4f6fa" stroke="#8892a8" stroke-width="1"/><path d="M6 3.500 C5 1 8 0.500 8.500 3" fill="none" stroke="#8892a8" stroke-width=".9"/><path d="M12.500 7.500 C14.500 8.500 14.500 11 13.500 12 C12.500 11 12 9 12.500 7.500 Z" fill="#a5aec2"/><rect x="0" y="14" width="16" height="3" fill="#eef2f8"/></svg><span class="t" style="left:1141px;top:58.0px;height:14px;line-height:14px;font-size:11px;color:#8f8b88;letter-spacing:0.21px;">Заливка фигуры</span><svg style="left:1231.5px;top:63px" width="6" height="4" viewBox="0 0 6 4"><path d="M0.300 0.300 L5.700 0.300 L3 3.300 Z" fill="#b3aea6"/></svg><svg style="left:1122px;top:79px" width="17" height="17" viewBox="0 0 17 17"><rect x="1.500" y="2.500" width="11" height="8" fill="#f0f3f8" stroke="#8892a8"/><path d="M15 1 L8 9 L6.500 11 L9 10 L16 2.500 Z" fill="#e8ecf3" stroke="#7e89a2" stroke-width=".8"/><rect x="0" y="13" width="16" height="3.500" fill="#8e99b5"/></svg><span class="t" style="left:1141px;top:80.2px;height:14px;line-height:14px;font-size:11px;color:#8f8b88;letter-spacing:0.31px;">Контур фигуры</span><svg style="left:1225.5px;top:85px" width="6" height="4" viewBox="0 0 6 4"><path d="M0.300 0.300 L5.700 0.300 L3 3.300 Z" fill="#b3aea6"/></svg><svg style="left:1122px;top:101px" width="17" height="17" viewBox="0 0 17 17"><ellipse cx="9.500" cy="12.500" rx="6.500" ry="3" fill="#c6cedc" opacity=".8"/><path d="M3.500 3 H13 L14.500 5 V10.500 L12.500 12 H3 L1.500 10 V5 Z" fill="#f1f4f9" stroke="#b5bece" stroke-width=".9"/></svg><span class="t" style="left:1141px;top:102.4px;height:14px;line-height:14px;font-size:11px;color:#8f8b88;letter-spacing:0.05px;">Эффекты для фигур</span><svg style="left:1251.5px;top:107px" width="6" height="4" viewBox="0 0 6 4"><path d="M0.300 0.300 L5.700 0.300 L3 3.300 Z" fill="#b3aea6"/></svg><span class="t" style="left:1000.5px;top:122.6px;height:14px;line-height:14px;font-size:11px;color:#3e6aaa;letter-spacing:0.07px;">Рисование</span><svg style="left:1253px;top:125px" width="8" height="8" viewBox="0 0 8 8"><path d="M0.500 5 V0.500 H5" fill="none" stroke="#7d9bc6" stroke-width="1"/><path d="M7.500 3.500 V7.500 H3.500 Z" fill="#7d9bc6"/><path d="M3 3 L6 6" stroke="#7d9bc6" stroke-width="1"/><path d="M1.500 6 V1.500 H6" fill="none" stroke="#fff" stroke-width="1" opacity=".8"/></svg>
<div class="grp" style="left:1268px;width:95px"></div><svg style="left:1275px;top:57px" width="16" height="16" viewBox="0 0 16 16"><g stroke="#1d2a5a" stroke-width=".9"><path d="M3.500 1.500 H6.500 V4.500 H3.500 Z M9.500 1.500 H12.500 V4.500 H9.500 Z" fill="#33437a"/><path d="M3 4.500 H7 L7.500 13.500 H1 Z M9 4.500 H13 L15 13.500 H8.500 Z" fill="#e3e8f5"/><rect x="6.500" y="6" width="3" height="2.500" fill="#33437a"/></g><path d="M2 10 H6.500 M9.500 10 H14" stroke="#8c9cc8" stroke-width="1"/></svg><span class="t" style="left:1294.5px;top:58.0px;height:14px;line-height:14px;font-size:11px;color:#15428B;letter-spacing:0.12px;">Найти</span><svg style="left:1275px;top:79px" width="17" height="17" viewBox="0 0 17 17"><text x="0" y="7.500" font-family="Liberation Sans" font-size="9" fill="#222">ab</text><text x="6" y="16" font-family="Liberation Sans" font-weight="bold" font-size="9" fill="#222">a</text><text x="11" y="16" font-family="Liberation Sans" font-weight="bold" font-size="9" fill="#2c8a2c">c</text><path d="M1.500 9 V13 H5 M3.500 11.300 L5.300 13 L3.500 14.700" fill="none" stroke="#3a64c8" stroke-width="1.200"/></svg><span class="t" style="left:1294.5px;top:80.2px;height:14px;line-height:14px;font-size:11px;color:#15428B;letter-spacing:0.13px;">Заменить</span><svg style="left:1349.5px;top:85px" width="6" height="4" viewBox="0 0 6 4"><path d="M0.300 0.300 L5.700 0.300 L3 3.300 Z" fill="#5577b4"/></svg><svg style="left:1278px;top:102px" width="12" height="15" viewBox="0 0 14 17"><path d="M1.500 0.800 V13 L4.500 10.200 L6.800 15.500 L8.800 14.600 L6.500 9.500 H10.500 Z" fill="#fff" stroke="#222" stroke-width="1.100"/></svg><span class="t" style="left:1294.5px;top:102.4px;height:14px;line-height:14px;font-size:11px;color:#15428B;letter-spacing:-0.03px;">Выделить</span><svg style="left:1349.5px;top:107px" width="6" height="4" viewBox="0 0 6 4"><path d="M0.300 0.300 L5.700 0.300 L3 3.300 Z" fill="#5577b4"/></svg><span class="t" style="left:1272.5px;top:122.6px;height:14px;line-height:14px;font-size:11px;color:#3e6aaa;letter-spacing:0.23px;">Редактирование</span>
<div class="a" style="left:0;top:142px;width:212px;height:564px;background:linear-gradient(#a3c1ea 0,#567db1 424px,#6691cd 564px)"></div><div class="a" style="left:0;top:142px;width:212px;height:20px;background:linear-gradient(#b9cfee,#a9c3e9)"></div><div class="a" style="left:0;top:161px;width:212px;height:1px;background:#4f80c4"></div><svg style="left:0;top:142px" width="212" height="20" viewBox="0 0 212 20"><defs><linearGradient id="tb1" x1="0" y1="0" x2="0" y2="1"><stop offset="0" stop-color="#f4f8fe"/><stop offset=".5" stop-color="#d3e2f7"/><stop offset="1" stop-color="#a3c1ea"/></linearGradient><linearGradient id="tb2" x1="0" y1="0" x2="0" y2="1"><stop offset="0" stop-color="#d3e2f7"/><stop offset=".5" stop-color="#b7cdee"/><stop offset="1" stop-color="#8eaee0"/></linearGradient></defs><path d="M73.500 19.500 V4 Q73.500 0.500 77 0.500 H132 Q136 0.500 138.500 3.500 L153 19.500 Z" fill="url(#tb2)" stroke="#5f86c4"/><path d="M0.500 20 V4 Q0.500 0.500 4 0.500 H60 Q64 0.500 66.500 3.500 L80.500 20 Z" fill="url(#tb1)"/><path d="M0.500 20 V4 Q0.500 0.500 4 0.500 H60 Q64 0.500 66.500 3.500 L80.500 20" fill="none" stroke="#5f86c4"/></svg><span class="t" style="left:8px;top:145.0px;height:14px;line-height:14px;font-size:11px;color:#0d2a63;letter-spacing:0.13px;font-weight:bold;">Слайды</span><span class="t" style="left:81.5px;top:145.0px;height:14px;line-height:14px;font-size:11px;color:#0d2a63;letter-spacing:0.37px;">Структура</span><span class="t" style="left:198px;top:142.3px;height:17px;line-height:17px;font-size:13px;color:#3d6cb0;letter-spacing:-0.23px;font-weight:bold;">x</span><div class="a" style="left:3px;top:166px;width:206px;height:145px;box-sizing:border-box;border:1px solid #ea7a1c;border-radius:2px;background:linear-gradient(#fbd7a2 0,#f7c47c 51px,#f2a93f 52px,#f2a840 100%);box-shadow:inset 0 0 0 1px rgba(255,230,180,.6)"></div><div class="a" style="left:23px;top:170px;width:182px;height:137px;box-sizing:border-box;background:#fff;border:1px solid #6b6b6b;border-bottom-color:#444;border-right-color:#444;box-shadow:1px 1px 2px rgba(0,0,0,.45)"></div><span class="t" style="left:7.5px;top:173.5px;height:16px;line-height:16px;font-size:12.5px;color:#fff;font-weight:bold;text-shadow:1px 1px 1px #8a6434;">1</span><div class="a" style="left:212px;top:142px;width:5px;height:565px;background:#a9c8f6;border-left:1px solid #dce9fb;box-sizing:border-box"></div><div class="a" style="left:211px;top:142px;width:1px;height:20px;background:#4f80c4"></div>
<div class="a" style="left:217px;top:142px;width:1148px;height:520px;box-sizing:border-box;border-left:1px solid #5a87cc;background:linear-gradient(#a3c1ea 0,#567db1 422px,#6490cc 520px)"></div><svg style="left:218px;top:142px" width="260" height="60" viewBox="0 0 260 60"><defs><linearGradient id="sw" x1="0" y1="0" x2="1" y2="0"><stop offset="0" stop-color="#bcd2f1"/><stop offset=".6" stop-color="#c0d5f2"/><stop offset="1" stop-color="#aac6ec"/></linearGradient></defs><path d="M0 0 H250 Q125 14.500 0 55 Z" fill="url(#sw)"/><path d="M250 0 Q125 14.500 0 55" fill="none" stroke="#d3e2f7" stroke-opacity=".6" stroke-width="1"/></svg><div class="a" style="left:465px;top:158px;width:650px;height:488px;background:#fff;box-shadow:2px 3px 5px rgba(20,40,80,.6)"></div><div class="a" style="left:513px;top:309px;width:555px;height:106px;box-sizing:border-box;border:1px dotted #222"></div><div class="a" style="left:561px;top:433px;width:459px;height:128px;box-sizing:border-box;border:1px dotted #222"></div><span class="t" style="left:641px;top:338.5px;height:47px;line-height:47px;font-size:36.5px;color:#000;letter-spacing:-0.51px;">Заголовок слайда</span><span class="t" style="left:659.5px;top:438.5px;height:34px;line-height:34px;font-size:26px;color:#8b8b8b;letter-spacing:0.07px;">Подзаголовок слайда</span><div class="a" style="left:217px;top:662px;width:1148px;height:7px;background:linear-gradient(#c7dcfa 0,#c7dcfa 1px,#a9c8f6 1px,#a9c8f6 6px,#6f9ada 6px,#6f9ada 100%)"></div><div class="a" style="left:217px;top:669px;width:1130px;height:37px;background:#fff;border-left:1px solid #7fa6e0;box-sizing:border-box"></div><span class="t" style="left:228px;top:674.1px;height:21px;line-height:21px;font-size:16px;color:#000;letter-spacing:-0.16px;">Заметки к слайду</span><div class="a" style="left:1347px;top:669px;width:18px;height:37px;background:#7f9dd0"></div><svg style="left:1351px;top:675px" width="10" height="6" viewBox="0 0 10 6"><path d="M0.500 5.500 L5 0.500 L9.500 5.500 Z" fill="#6782b5"/></svg><svg style="left:1351px;top:695px" width="10" height="6" viewBox="0 0 10 6"><path d="M0.500 0.500 L9.500 0.500 L5 5.500 Z" fill="#6782b5"/></svg>
<div class="a" style="left:0;top:706px;width:1365px;height:22px;background:linear-gradient(#d7e6f9 0,#c7dcf8 9px,#b3d0f5 10px,#d7e5f7 18px,#bad4f7 100%);border-top:1px solid #567db1;box-sizing:border-box"></div><div class="a" style="left:1102px;top:707px;width:263px;height:21px;background:linear-gradient(#c4daf8 0,#a9c6ee 8px,#8cb0e6 9px,#a6c4ee 100%)"></div><div class="a" style="left:1102px;top:707px;width:1px;height:21px;background:#7f9fcd"></div><div class="a" style="left:81px;top:708px;width:1px;height:19px;background:#8cabda;box-shadow:1px 0 0 rgba(255,255,255,.7)"></div><div class="a" style="left:166px;top:708px;width:1px;height:19px;background:#8cabda;box-shadow:1px 0 0 rgba(255,255,255,.7)"></div><div class="a" style="left:270px;top:708px;width:1px;height:19px;background:#8cabda;box-shadow:1px 0 0 rgba(255,255,255,.7)"></div><span class="t" style="left:8.5px;top:710.0px;height:14px;line-height:14px;font-size:11px;color:#15428B;letter-spacing:-0.18px;">Слайд 1 из 1</span><span class="t" style="left:91px;top:710.0px;height:14px;line-height:14px;font-size:11px;color:#15428B;letter-spacing:0.13px;">"Тема Office"</span><span class="t" style="left:176.5px;top:710.0px;height:14px;line-height:14px;font-size:11px;color:#15428B;letter-spacing:-0.14px;">Русский (Россия)</span><div class="a" style="left:1107px;top:709px;width:57px;height:18px;box-sizing:border-box;border:1px solid #8aa9d8;border-radius:2px;background:linear-gradient(#dbe8f9,#c1d6f2)"></div><div class="a" style="left:1108px;top:710px;width:18px;height:16px;background:linear-gradient(#fbd59a,#f6b552 50%,#f9c873)"></div><div class="a" style="left:1126px;top:710px;width:1px;height:16px;background:#9fb9df"></div><div class="a" style="left:1144px;top:710px;width:1px;height:16px;background:#9fb9df"></div><svg style="left:1111.5px;top:711px" width="13" height="13" viewBox="0 0 14 14"><rect x="1" y="1.500" width="11.500" height="10.500" fill="#fff" stroke="#444" stroke-width="1.200"/><path d="M5 1.500 V12 M5 7.500 H12.500" stroke="#444" stroke-width="1.200"/></svg><svg style="left:1129.5px;top:711px" width="13" height="13" viewBox="0 0 14 14"><g fill="#fff" stroke="#444" stroke-width="1.100"><rect x="1" y="2" width="4.500" height="3.500"/><rect x="8" y="2" width="4.500" height="3.500"/><rect x="1" y="8" width="4.500" height="3.500"/><rect x="8" y="8" width="4.500" height="3.500"/></g></svg><svg style="left:1147.5px;top:711px" width="13" height="13" viewBox="0 0 14 14"><path d="M1 1.500 H13" stroke="#444" stroke-width="1.300"/><rect x="2.500" y="2.500" width="9" height="5" fill="#fff" stroke="#444" stroke-width="1.100"/><path d="M7 7.500 V11.500 M4 12 H10" stroke="#444" stroke-width="1.200"/></svg><span class="t" style="left:1171.5px;top:710.5px;height:14px;line-height:14px;font-size:11px;color:#15428B;letter-spacing:-0.18px;">68%</span><div class="a" style="left:1217px;top:717px;width:104px;height:1px;background:#e6eefb;box-shadow:0 1px 0 #6f8fc4"></div><div class="a" style="left:1270px;top:713px;width:1px;height:9px;background:#e6eefb;box-shadow:1px 0 0 #6f8fc4"></div><svg style="left:1201px;top:709px" width="18" height="18" viewBox="0 0 18 18"><defs><linearGradient id="zb1210" x1="0" y1="0" x2="0" y2="1"><stop offset="0" stop-color="#fff"/><stop offset=".5" stop-color="#e8eef8"/><stop offset=".51" stop-color="#cbd8ee"/><stop offset="1" stop-color="#f3f7fd"/></linearGradient></defs><circle cx="9" cy="9" r="7.500" fill="url(#zb1210)" stroke="#5d7eb5" stroke-width="1.200"/><path d="M5 9 H13" stroke="#333" stroke-width="2"/></svg><svg style="left:1319px;top:709px" width="18" height="18" viewBox="0 0 18 18"><defs><linearGradient id="zb1328" x1="0" y1="0" x2="0" y2="1"><stop offset="0" stop-color="#fff"/><stop offset=".5" stop-color="#e8eef8"/><stop offset=".51" stop-color="#cbd8ee"/><stop offset="1" stop-color="#f3f7fd"/></linearGradient></defs><circle cx="9" cy="9" r="7.500" fill="url(#zb1328)" stroke="#5d7eb5" stroke-width="1.200"/><path d="M5 9 H13 M9 5 V13" stroke="#333" stroke-width="2"/></svg><svg style="left:1247px;top:710px" width="11" height="15" viewBox="0 0 11 15"><path d="M1.500 1 H9.500 V8.500 L5.500 13.500 L1.500 8.500 Z" fill="#e9f0fb" stroke="#55709f" stroke-width="1"/><path d="M5.500 3.500 V8" stroke="#8aa2cb" stroke-width="1"/></svg><svg style="left:1345px;top:709px" width="16" height="16" viewBox="0 0 16 16"><rect x="0.500" y="0.500" width="14.500" height="14" fill="#f3f6fb" stroke="#6b7c9c" stroke-dasharray="1 1"/><path d="M7.700 2 V5 M7.700 10 V13 M2 7.500 H5 M10.500 7.500 H13.500 M6 3.500 H9.500 M6 11.500 H9.500 M3.500 6 V9 M12 6 V9" stroke="#333" stroke-width="1"/></svg>
<svg style="left:0;top:0" width="1365" height="728" viewBox="0 0 1365 728"><g fill="#c6cbd5" fill-opacity=".37"><path d="M1249.7 638.2 L1294.3 604.2 L1304.1 602.1 L1311.3 603.3 L1305.6 606.8 L1312.3 611.0 L1310.3 612.9 L1323.9 641.9 L1267.7 673.1 L1254.7 640.2 Z"/><path d="M1243.6 631.7 C1240.8 622.1 1244.8 608.5 1257.2 599.2 C1264.6 595.5 1269.5 596.7 1273.2 597.4 L1274.5 592.4 L1281.9 604.8 L1268.9 612.0 L1270.5 605.4 C1260.9 605.8 1251.6 612.8 1248.5 615.9 C1246.0 620.9 1245.4 624.6 1243.6 631.7 Z"/><circle cx="1326.500" cy="637" r="1.800"/><path d="M1326.2 629.8 Q1336.3 619.6 1354.2 618.4 L1353.6 620.2 Q1337.5 621.5 1326.2 629.8 Z"/></g><g font-family="Liberation Sans" font-weight="bold"><text transform="translate(1192 709) rotate(-31)" font-size="40" font-style="italic" fill="#c6cbd5" fill-opacity=".42" stroke="#c6cbd5" stroke-opacity=".42" stroke-width="2.200" stroke-linejoin="round" textLength="88" lengthAdjust="spacingAndGlyphs">ALL-</text><text transform="translate(1272.500 650.500) rotate(-29)" font-size="15" fill="#628bc5" fill-opacity=".9" stroke="#628bc5" stroke-width=".700" textLength="45.500" lengthAdjust="spacingAndGlyphs">FREE</text><text transform="translate(1282 664) rotate(-28)" font-size="15" fill="#628bc5" fill-opacity=".9" stroke="#628bc5" stroke-width=".700" textLength="47.500" lengthAdjust="spacingAndGlyphs">LOAD</text><text transform="translate(1330.500 639) rotate(-31)" font-size="11" font-style="italic" fill="#c6cbd5" fill-opacity=".4" textLength="27" lengthAdjust="spacingAndGlyphs">NET</text></g></svg>
<svg style="left:2px;top:2px" width="42" height="42" viewBox="0 0 42 42"><defs><radialGradient id="ob" cx=".5" cy=".5" r=".5"><stop offset="0" stop-color="#f4f6fa"/><stop offset=".7" stop-color="#eef1f6"/><stop offset=".9" stop-color="#d5dbe6"/><stop offset="1" stop-color="#a7b0c1"/></radialGradient><linearGradient id="ob2" x1="0" y1="0" x2="0" y2="1"><stop offset="0" stop-color="#fff" stop-opacity="1"/><stop offset=".48" stop-color="#f3f5f9" stop-opacity=".9"/><stop offset=".5" stop-color="#c9d2e1" stop-opacity=".95"/><stop offset=".75" stop-color="#e6ebf3" stop-opacity=".9"/><stop offset="1" stop-color="#fff" stop-opacity="1"/></linearGradient><linearGradient id="lr" x1="0" y1="0" x2="1" y2="1"><stop offset="0" stop-color="#d8300c"/><stop offset="1" stop-color="#f59a1c"/></linearGradient><linearGradient id="ly" x1="0" y1="0" x2="1" y2="1"><stop offset="0" stop-color="#fbc23a"/><stop offset="1" stop-color="#ee8f0e"/></linearGradient><linearGradient id="lg" x1="0" y1="0" x2="1" y2="1"><stop offset="0" stop-color="#86c23a"/><stop offset="1" stop-color="#3f8a22"/></linearGradient><linearGradient id="lb" x1="0" y1="0" x2="1" y2="1"><stop offset="0" stop-color="#5fb0f0"/><stop offset="1" stop-color="#1f6fd0"/></linearGradient></defs><circle cx="20.300" cy="20.800" r="18.800" fill="#3c414b" opacity=".5"/><circle cx="20.300" cy="20.400" r="17.800" fill="url(#ob)" stroke="#8a93a5" stroke-width=".9"/><circle cx="20.300" cy="20.400" r="16" fill="url(#ob2)"/><g fill="none" stroke-linejoin="round" stroke-linecap="butt"><path d="M17.300 19.500 H12.300 Q10.500 19.500 10.500 17.700 V12.300 Q10.500 10.500 12.300 10.500 H17.700 Q19.500 10.500 19.500 12.300 V16.500" stroke="url(#lr)" stroke-width="3"/><path d="M23 15 H26.500 Q28 15 28 16.500 V20 H26" stroke="url(#lb)" stroke-width="2"/><path d="M16.500 23.500 H14.300 Q12.500 23.500 12.500 25.300 V28.700 Q12.500 30.500 14.300 30.500 H17.700 Q19.500 30.500 19.500 28.700 V26.500" stroke="url(#ly)" stroke-width="3"/><path d="M26 23.500 H27.700 Q29.500 23.500 29.500 25.300 V27.700 Q29.500 29.500 27.700 29.500 H25.300 Q23.500 29.500 23.500 27.700 V26" stroke="url(#lg)" stroke-width="3"/></g><circle cx="19.500" cy="19.500" r="1.350" fill="#e85a1a"/><circle cx="23.600" cy="19.500" r="1.350" fill="#2a7ad8"/><circle cx="19.500" cy="23.600" r="1.350" fill="#f5b02a"/><circle cx="23.600" cy="23.600" r="1.350" fill="#6cb02a"/></svg>
</body></html>
